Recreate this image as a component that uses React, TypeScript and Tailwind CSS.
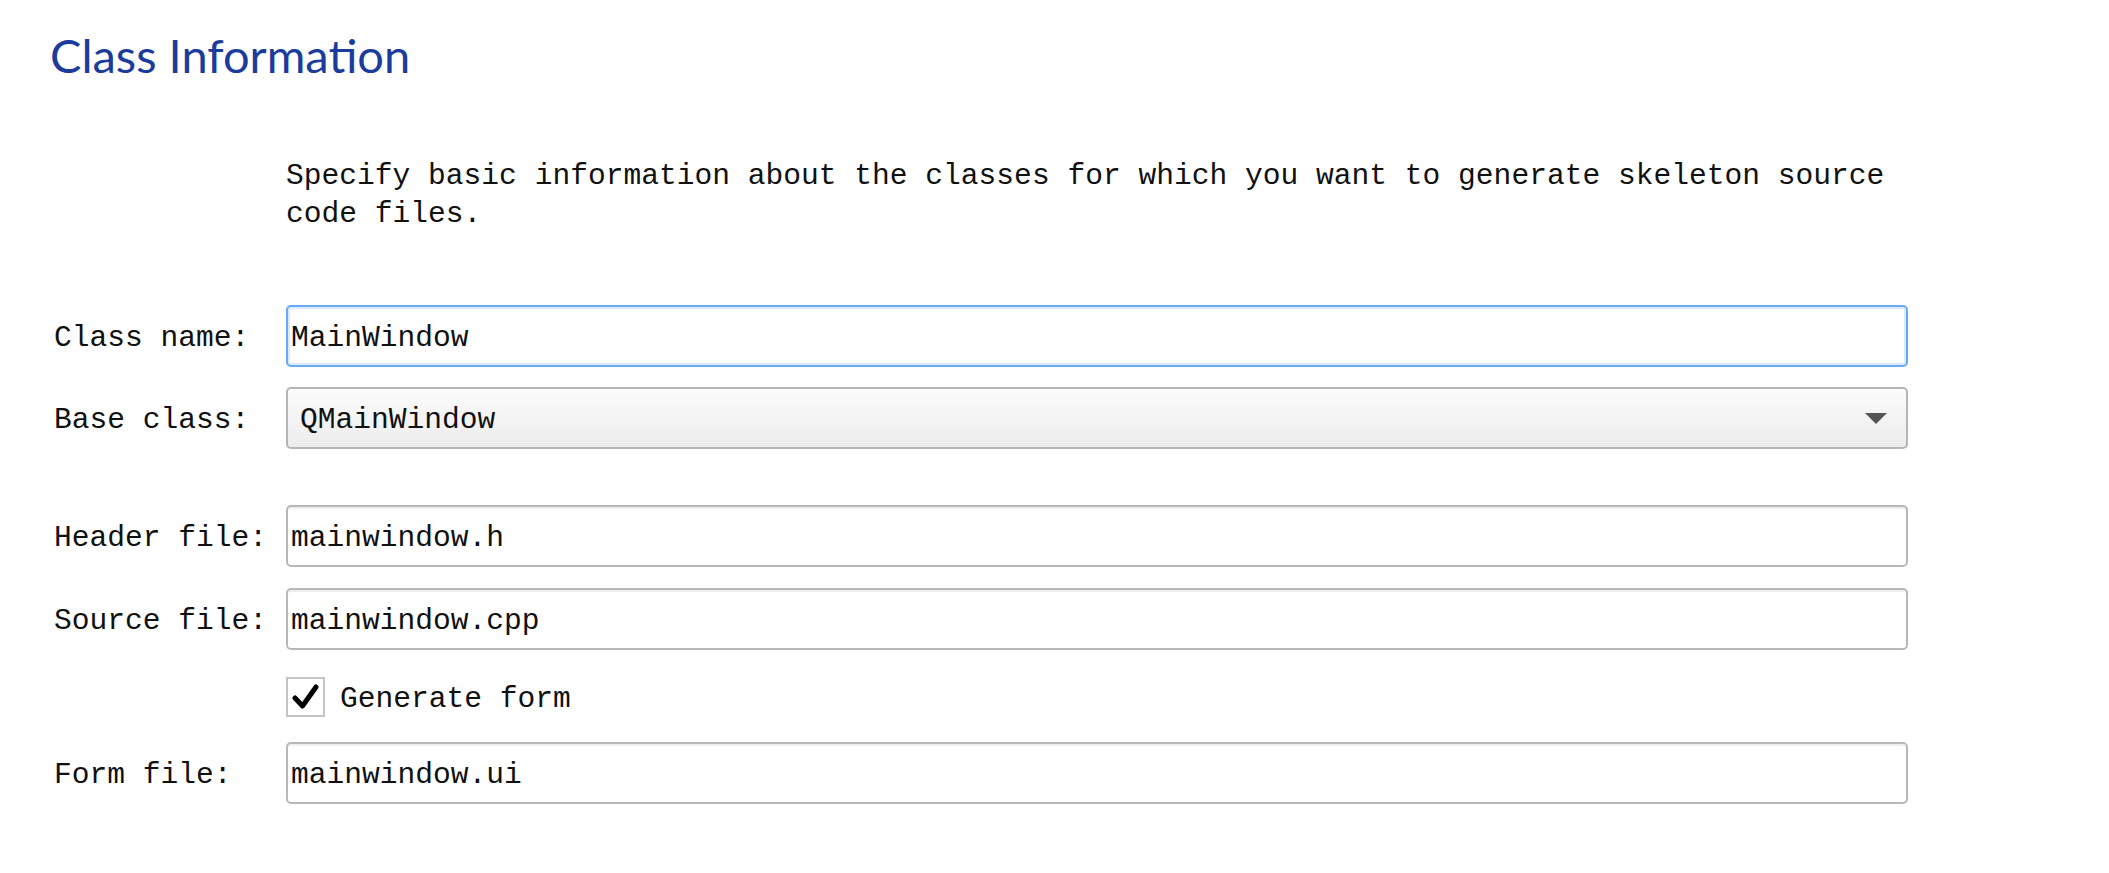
const mono = { fontFamily: '"Liberation Mono", "DejaVu Sans Mono", monospace' }

const fileFields = [
  { label: 'Header file:', value: 'mainwindow.h', gap: 'mt-[56px]' },
  { label: 'Source file:', value: 'mainwindow.cpp', gap: 'mt-[21px]' },
]

function Label({ children }: { children: React.ReactNode }) {
  return (
    <div className="w-[232px] shrink-0 pt-[5px] text-[29.6px] leading-none text-[#111]">
      {children}
    </div>
  )
}

function TextField({ value }: { value: string }) {
  return (
    <div className="flex h-[62px] w-[1622px] items-center rounded-[5px] border-2 border-[#b8b8b8] bg-white pl-[3px] pt-[5px] text-[29.6px] text-[#111] shadow-[inset_0_2px_0_#efefef]">
      {value}
    </div>
  )
}

export default function App() {
  return (
    <div className="min-h-screen bg-white text-[#111]" style={mono}>
      <div className="pl-[50px] pt-[32px]">
        <h1
          className="text-[47px] leading-[47px] font-normal text-[#1c3c9c]"
          style={{ fontFamily: 'Lato, "Noto Sans", sans-serif' }}
        >
          Class Information
        </h1>
      </div>

      <p className="ml-[286px] mt-[78px] w-[1622px] text-[29.6px] leading-[38px]">
        Specify basic information about the classes for which you want to
        generate skeleton source code files.
      </p>

      <div className="mt-[72px] flex flex-col pl-[54px]">
        {/* Class name */}
        <div className="flex items-center">
          <Label>Class name:</Label>
          <div className="flex h-[62px] w-[1622px] items-center rounded-[5px] border-2 border-[#66aaf5] bg-white pl-[3px] pt-[5px] text-[29.6px] shadow-[inset_0_0_0_2px_#dcebfc]">
            MainWindow
          </div>
        </div>

        {/* Base class */}
        <div className="mt-[20px] flex items-center">
          <Label>Base class:</Label>
          <div className="flex h-[62px] w-[1622px] items-center justify-between rounded-[5px] border-2 border-[#b5b5b5] bg-gradient-to-b from-[#fcfcfc] to-[#ececec] pl-[12px] pr-[19px] text-[29.6px]">
            <span className="pt-[5px]">QMainWindow</span>
            <svg width="22" height="11" viewBox="0 0 22 11">
              <polygon points="0,0 22,0 11,11" fill="#555" />
            </svg>
          </div>
        </div>

        {fileFields.map((f) => (
          <div key={f.label} className={`${f.gap} flex items-center`}>
            <Label>{f.label}</Label>
            <TextField value={f.value} />
          </div>
        ))}

        {/* Generate form */}
        <div className="mt-[27px] flex items-center pl-[232px]">
          <div className="flex h-[40px] w-[39px] items-center justify-center border-2 border-[#c4c4c4] bg-white">
            <svg width="28" height="26" viewBox="0 0 28 26">
              <path
                d="M3 14 L10.5 22 L24 3"
                fill="none"
                stroke="#000"
                strokeWidth="5"
                strokeLinecap="round"
                strokeLinejoin="round"
              />
            </svg>
          </div>
          <span className="ml-[15px] pt-[5px] text-[29.6px] leading-none">Generate form</span>
        </div>

        {/* Form file */}
        <div className="mt-[25px] flex items-center">
          <Label>Form file:</Label>
          <TextField value="mainwindow.ui" />
        </div>
      </div>
    </div>
  )
}
